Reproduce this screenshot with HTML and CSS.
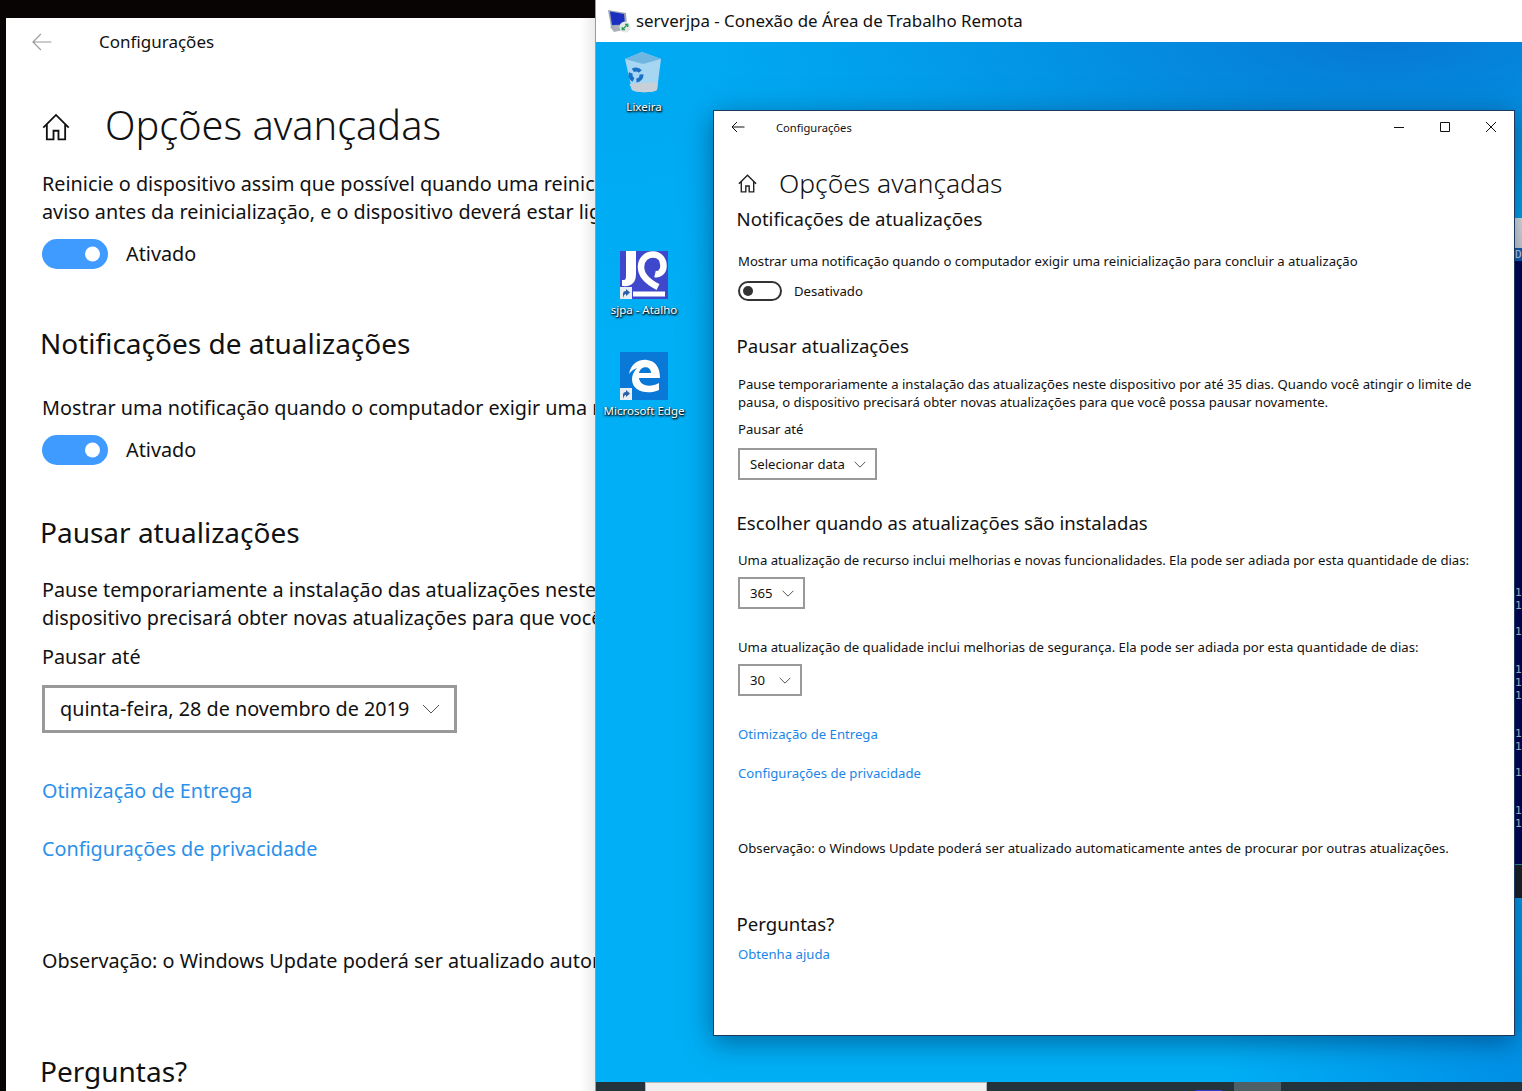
FILE: index.html
```html
<!DOCTYPE html>
<html lang="pt-BR">
<head>
    <meta charset="UTF-8">
    <title>Opções avançadas</title>
    <link rel="stylesheet" href="styles.css">
</head>
<body>
    <!-- janela local, cortada pela conexão remota -->
    <div class="local-side">
        <div class="settings settings-big">
            <div class="titlebar">
                <svg class="back-icon" viewBox="0 0 18 16"><path d="M17.5 8H1M8 .8 .8 8 8 15.2"/></svg>
                <span class="app-name">Configurações</span>
            </div>
            <div class="page-head">
                <svg class="home-icon" viewBox="0 0 26 26"><path d="M1.2 13.5 13 1.8l11.8 11.7M4.5 10.5V24.5h6.2v-8h4.6v8h6.2V10.5"/></svg>
                <h1>Opções avançadas</h1>
            </div>
            <p class="restart-text">Reinicie o dispositivo assim que possível quando uma reinicialização<br>aviso antes da reinicialização, e o dispositivo deverá estar ligado</p>
            <div class="toggle-row">
                <span class="toggle toggle-on"></span>
                <span>Ativado</span>
            </div>
            <h2 class="notify-title">Notificações de atualizações</h2>
            <p class="notify-text">Mostrar uma notificação quando o computador exigir uma reinicialização</p>
            <div class="toggle-row">
                <span class="toggle toggle-on"></span>
                <span>Ativado</span>
            </div>
            <h2 class="pause-title">Pausar atualizações</h2>
            <p class="pause-text">Pause temporariamente a instalação das atualizações neste dispositivo<br>dispositivo precisará obter novas atualizações para que você possa</p>
            <p class="pause-label">Pausar até</p>
            <div class="select date-select">
                <span>quinta-feira, 28 de novembro de 2019</span>
                <svg class="chevron" viewBox="0 0 18 10"><path d="M1 1l8 8 8-8"/></svg>
            </div>
            <a class="link link-first">Otimização de Entrega</a>
            <a class="link link-second">Configurações de privacidade</a>
            <p class="note-text">Observação: o Windows Update poderá ser atualizado automaticamente</p>
            <h2 class="help-title">Perguntas?</h2>
        </div>
    </div>

    <div class="remote-side">
        <div class="rdp-bar">
            <svg class="rdp-icon" viewBox="0 0 24 24">
                <path d="M0 1l18 3 1 13-16 1z" fill="#9aa3b5"/>
                <path d="M2 2.5l14 2.5 1 10.5-13 .5z" fill="#1a2fc0"/>
                <path d="M2 18l15-1 3 3-14 3z" fill="#a9aeb8"/>
                <circle cx="17" cy="18" r="5.5" fill="#e4e8e6"/>
                <path d="M14.3 20.7l5.4-5.4M14.3 18v2.7H17M19.7 18v-2.7H17" stroke="#2c9a58" stroke-width="1.3" fill="none"/>
            </svg>
            <span class="rdp-title">serverjpa - Conexão de Área de Trabalho Remota</span>
        </div>
        <div class="desktop">
            <div class="desk-icon bin-icon">
                <svg viewBox="0 0 48 48" width="48" height="48">
                    <path d="M5 8 22 1l19 7-4 31c-5 3-20 3-25 0z" fill="#a6d6f1"/>
                    <path d="M5 8l17-7 19 7-18 5z" fill="#6fb6e2"/>
                    <path d="M9.5 33 38 31l-1 8c-5 3-20 3-25 0z" fill="#c6d0d6"/>
                    <circle cx="16" cy="24" r="5.5" fill="none" stroke="#1c6fc4" stroke-width="4" stroke-dasharray="8 3"/>
                </svg>
                <span class="desk-label">Lixeira</span>
            </div>
            <div class="desk-icon sjpa-icon">
                <div class="tile tile-jq">
                    <svg viewBox="0 0 48 48" width="48" height="48">
                        <path d="M6 0h10v23c0 9-5 13-14 12v-6c4 .5 4-1 4-6z" fill="#fff"/>
                        <path d="M38 36C28 31 21 25 21 16 21 8 27 3.500 33 3.500 40 3.500 43.500 9 43.500 15 43.500 21 39 24 35 23" fill="none" stroke="#fff" stroke-width="6.500"/>
                        <rect x="13" y="40.500" width="32" height="5" fill="#fff"/>
                    </svg>
                    <svg class="shortcut" viewBox="0 0 12 12"><rect width="12" height="12" fill="#e8eef2"/><path d="M3 11V7c0-2 1-3 3-3V2l4 3.500L6 9V7C4.500 7 4 8 3 11z" fill="#2b5fa8"/></svg>
                </div>
                <span class="desk-label">sjpa - Atalho</span>
            </div>
            <div class="desk-icon edge-icon">
                <div class="tile tile-edge">
                    <svg viewBox="0 0 48 48" width="48" height="48">
                        <path d="M9 22C11 11 20 7 27 8c9 1 13 8 13 18H19c1 8 11 10 20 5v7c-11 5-27 2-27-11 0-4 2-8 5-11-3 1-6 3-8 6zM19 21h12c0-7-10-8-12 0z" fill="#fff"/>
                    </svg>
                    <svg class="shortcut" viewBox="0 0 12 12"><rect width="12" height="12" fill="#e8eef2"/><path d="M3 11V7c0-2 1-3 3-3V2l4 3.500L6 9V7C4.500 7 4 8 3 11z" fill="#2b5fa8"/></svg>
                </div>
                <span class="desk-label">Microsoft Edge</span>
            </div>

            <div class="console-strip">
                <span class="strip-gray"></span>
                <span class="strip-title">D</span>
                <span class="strip-body">
                    <span>1</span><span>1</span><span class="gap-a">1</span>
                    <span class="gap-b">1</span><span>1</span><span>1</span>
                    <span class="gap-b">1</span><span>1</span><span class="gap-a">1</span>
                    <span class="gap-b">1</span><span>1</span>
                </span>
                <span class="strip-dark"></span>
            </div>

            <div class="settings settings-small remote-window">
                <div class="titlebar">
                    <svg class="back-icon" viewBox="0 0 14 12"><path d="M13.5 6H1M6 1 1 6l5 5"/></svg>
                    <span class="app-name">Configurações</span>
                    <div class="window-buttons">
                        <svg viewBox="0 0 12 12"><path d="M1 6.500h10"/></svg>
                        <svg viewBox="0 0 12 12"><path d="M1.500 1.500h9v9h-9z"/></svg>
                        <svg viewBox="0 0 12 12"><path d="M1 1l10 10M11 1 1 11"/></svg>
                    </div>
                </div>
                <div class="page-head">
                    <svg class="home-icon" viewBox="0 0 26 26"><path d="M1.2 13.5 13 1.8l11.8 11.7M4.5 10.5V24.5h6.2v-8h4.6v8h6.2V10.5"/></svg>
                    <h1>Opções avançadas</h1>
                </div>
                <h2 class="notify-title">Notificações de atualizações</h2>
                <p class="notify-text">Mostrar uma notificação quando o computador exigir uma reinicialização para concluir a atualização</p>
                <div class="toggle-row">
                    <span class="toggle toggle-off"></span>
                    <span>Desativado</span>
                </div>
                <h2 class="pause-title">Pausar atualizações</h2>
                <p class="pause-text">Pause temporariamente a instalação das atualizações neste dispositivo por até 35 dias. Quando você atingir o limite de<br>pausa, o dispositivo precisará obter novas atualizações para que você possa pausar novamente.</p>
                <p class="pause-label">Pausar até</p>
                <div class="select date-select">
                    <span>Selecionar data</span>
                    <svg class="chevron" viewBox="0 0 18 10"><path d="M1 1l8 8 8-8"/></svg>
                </div>
                <h2 class="when-title">Escolher quando as atualizações são instaladas</h2>
                <p class="feature-text">Uma atualização de recurso inclui melhorias e novas funcionalidades. Ela pode ser adiada por esta quantidade de dias:</p>
                <div class="select days-select">
                    <span>365</span>
                    <svg class="chevron" viewBox="0 0 18 10"><path d="M1 1l8 8 8-8"/></svg>
                </div>
                <p class="quality-text">Uma atualização de qualidade inclui melhorias de segurança. Ela pode ser adiada por esta quantidade de dias:</p>
                <div class="select days-select days-short">
                    <span>30</span>
                    <svg class="chevron" viewBox="0 0 18 10"><path d="M1 1l8 8 8-8"/></svg>
                </div>
                <a class="link link-first">Otimização de Entrega</a>
                <a class="link link-second">Configurações de privacidade</a>
                <p class="note-text">Observação: o Windows Update poderá ser atualizado automaticamente antes de procurar por outras atualizações.</p>
                <h2 class="help-title">Perguntas?</h2>
                <a class="link help-link">Obtenha ajuda</a>
            </div>
        </div>
        <div class="taskbar">
            <span class="task-search"></span>
            <span class="task-app"><span class="task-app-icon"></span></span>
            <span class="task-active"></span>
        </div>
    </div>
</body>
</html>
```
FILE: styles.css
```css
* {
    margin: 0;
    padding: 0;
    box-sizing: border-box;
}

html, body {
    height: 100%;
    overflow: hidden;
}

body {
    display: flex;
    background-color: #070403;
    font-family: "Noto Sans", "Open Sans", Arial, sans-serif;
    color: #111;
}

/* lado esquerdo */
.local-side {
    width: 595px;
    flex-shrink: 0;
    padding: 18px 0 0 6px;
    height: 100%;
}

.local-side .settings {
    height: 100%;
    overflow: hidden;
    background: linear-gradient(to right, #fff 97.5%, #ececec);
}

.settings {
    background-color: #fff;
    white-space: nowrap;
}

.settings h1, .settings h2, .settings p {
    font-weight: 400;
}

.titlebar {
    display: flex;
    align-items: center;
}

.page-head {
    display: flex;
    align-items: center;
}

.back-icon, .home-icon, .chevron, .window-buttons svg {
    fill: none;
    stroke-width: 1;
    flex-shrink: 0;
}

.toggle-row {
    display: flex;
    align-items: center;
}

.toggle {
    display: block;
    position: relative;
    border-radius: 100px;
}

.toggle::after {
    content: "";
    position: absolute;
    border-radius: 50%;
    top: 50%;
    transform: translateY(-50%);
}

.select {
    display: flex;
    align-items: center;
    justify-content: space-between;
    border-style: solid;
    border-color: #999;
}

.chevron {
    stroke: #555;
}

.link {
    display: block;
    color: #1a86e8;
}

/* janela grande (1,5x) */
.settings-big {
    font-size: 19.8px;
    line-height: 28px;
    padding-left: 36px;
}

.settings-big .link {
    color: #2b90ea;
}

.settings-big .titlebar {
    height: 48px;
    margin-left: -10px;
}

.settings-big .back-icon {
    width: 20px;
    height: 18px;
    stroke: #999;
}

.settings-big .app-name {
    font-size: 17px;
    margin-left: 47px;
}

.settings-big .page-head {
    margin-top: 29px;
    height: 60px;
}

.settings-big .home-icon {
    width: 28px;
    height: 28px;
    stroke: #111;
    stroke-width: 1.7;
    margin-top: 3px;
}

.settings-big h1 {
    font-size: 39.7px;
    line-height: 60px;
    margin-left: 35px;
    font-weight: 300;
}

.settings-big h2 {
    font-size: 28px;
    line-height: 40px;
    margin-left: -2px;
}

.settings-big .restart-text {
    margin-top: 15px;
}

.settings-big .toggle-row {
    margin-top: 13px;
    height: 30px;
    gap: 18px;
}

.settings-big .toggle {
    width: 66px;
    height: 30px;
    background-color: #3f9bff;
}

.settings-big .toggle::after {
    right: 8px;
    width: 15px;
    height: 15px;
    background-color: #fff;
}

.settings-big .notify-title {
    margin-top: 54px;
}

.settings-big .notify-text {
    margin-top: 31px;
}

.settings-big .pause-title {
    margin-top: 47px;
}

.settings-big .pause-text {
    margin-top: 24px;
}

.settings-big .pause-label {
    margin-top: 11px;
}

.settings-big .date-select {
    width: 415px;
    height: 48px;
    margin-top: 14px;
    border-width: 3px;
    padding: 0 14px 0 15px;
}

.settings-big .chevron {
    width: 18px;
    height: 10px;
}

.settings-big .link-first {
    margin-top: 44px;
}

.settings-big .link-second {
    margin-top: 30px;
}

.settings-big .note-text {
    margin-top: 84px;
}

.settings-big .help-title {
    margin-top: 76px;
}

/* conexão remota */
.remote-side {
    flex: 1;
    display: flex;
    flex-direction: column;
    height: 100%;
    border-left: 1px solid #9a9a9a;
    min-width: 0;
}

.rdp-bar {
    height: 42px;
    flex-shrink: 0;
    background-color: #fff;
    display: flex;
    align-items: center;
    gap: 4px;
    padding-left: 12px;
    font-size: 16.9px;
    color: #111;
}

.rdp-title {
    margin-top: -2px;
}

.rdp-icon {
    width: 24px;
    height: 24px;
}

.desktop {
    flex: 1;
    position: relative;
    overflow: hidden;
    background-color: #00aff5;
    background-image:
        radial-gradient(ellipse 700px 220px at 85% 0%, #0679d4 0%, rgba(6, 121, 212, 0) 100%),
        radial-gradient(ellipse 300px 500px at 100% 100%, #0090e6 0%, rgba(0, 144, 230, 0) 100%),
        radial-gradient(ellipse 400px 300px at 0% 0%, #00a8f2 0%, rgba(0, 168, 242, 0) 100%);
}

.desk-icon {
    position: absolute;
    width: 90px;
    display: flex;
    flex-direction: column;
    align-items: center;
    color: #fff;
    font-size: 11.5px;
    line-height: 16px;
}

.desk-label {
    text-shadow: 0 1px 2px #000, 1px 1px 2px #000;
    white-space: nowrap;
}

.bin-icon {
    left: 3px;
    top: 9px;
}

.sjpa-icon {
    left: 3px;
    top: 209px;
}

.edge-icon {
    left: 3px;
    top: 310px;
}

.tile {
    position: relative;
    width: 48px;
    height: 48px;
    margin-bottom: 3px;
}

.tile-jq {
    background-color: #3f48cc;
}

.tile-edge {
    background-color: #0a78d7;
}

.shortcut {
    position: absolute;
    left: 0;
    bottom: 0;
    width: 12px;
    height: 12px;
}

.console-strip {
    position: absolute;
    right: 0;
    top: 176px;
    width: 7px;
    display: flex;
    flex-direction: column;
    font-family: "DejaVu Sans Mono", monospace;
    font-size: 11px;
    line-height: 13px;
    color: #c8c8d8;
}

.strip-gray {
    height: 30px;
    background: linear-gradient(#e8e8e8, #d8d8d8);
}

.strip-title {
    height: 13px;
    background-color: #0a5fb4;
    color: #dde;
}

.strip-body {
    height: 604px;
    background-color: #02014f;
    border-bottom: 1px solid #2a8f98;
    display: flex;
    flex-direction: column;
    padding-top: 325px;
}

.gap-a {
    margin-top: 13px;
}

.gap-b {
    margin-top: 25px;
}

.strip-dark {
    height: 33px;
    background-color: #1d1d1d;
}

.taskbar {
    height: 9px;
    flex-shrink: 0;
    background-color: #22333c;
    display: flex;
    overflow: hidden;
    padding-left: 49px;
}

.task-search {
    width: 342px;
    background-color: #f0f0f0;
    border: 1px solid #b5b5b5;
    border-bottom: none;
}

.task-app {
    width: 235px;
    display: flex;
    justify-content: flex-end;
}

.task-app-icon {
    width: 26px;
    background-color: #3b36d0;
    margin-top: 8px;
}

.task-active {
    width: 47px;
    margin-left: 12px;
    background-color: #4e5f66;
}

/* janela remota */
.remote-window {
    position: absolute;
    left: 117px;
    top: 68px;
    width: 802px;
    height: 926px;
    border: 1px solid #1c3a5a;
    box-shadow: 0 6px 26px rgba(0, 30, 70, 0.5);
    font-size: 13.15px;
    line-height: 19px;
    padding-left: 24px;
}

.settings-small .titlebar {
    height: 32px;
    margin-left: -7px;
}

.settings-small .back-icon {
    width: 14px;
    height: 12px;
    stroke: #111;
}

.settings-small .app-name {
    font-size: 11.2px;
    margin-left: 31px;
}

.window-buttons {
    margin-left: auto;
    display: flex;
    gap: 34px;
    padding-right: 17px;
}

.window-buttons svg {
    width: 12px;
    height: 12px;
    stroke: #111;
}

.settings-small .page-head {
    margin-top: 20px;
    height: 40px;
}

.settings-small .home-icon {
    width: 19px;
    height: 19px;
    stroke: #222;
    stroke-width: 1.9;
}

.settings-small h1 {
    font-size: 26.4px;
    line-height: 40px;
    margin-left: 22px;
    font-weight: 300;
}

.settings-small h2 {
    font-size: 18.6px;
    line-height: 26px;
    margin-left: -1.5px;
}

.settings-small .notify-title {
    margin-top: 3px;
}

.settings-small .notify-text {
    margin-top: 20px;
}

.settings-small .toggle-row {
    margin-top: 10px;
    height: 20px;
    gap: 12px;
}

.settings-small .toggle {
    width: 44px;
    height: 20px;
    border: 2px solid #333;
}

.settings-small .toggle::after {
    left: 3px;
    width: 10px;
    height: 10px;
    background-color: #333;
}

.settings-small .pause-title {
    margin-top: 32px;
}

.settings-small .pause-text {
    margin-top: 16px;
    line-height: 18px;
}

.settings-small .pause-label {
    margin-top: 9px;
}

.settings-small .select {
    height: 32px;
    margin-top: 7px;
    border-width: 2px;
    padding: 0 9px 0 10px;
}

.settings-small .date-select {
    width: 139px;
    margin-top: 9px;
}

.settings-small .days-select {
    width: 67px;
}

.settings-small .days-short {
    width: 64px;
}

.settings-small .chevron {
    width: 12px;
    height: 7px;
    stroke-width: 1.5;
}

.settings-small .when-title {
    margin-top: 30px;
}

.settings-small .feature-text {
    margin-top: 15px;
}

.settings-small .quality-text {
    margin-top: 29px;
}

.settings-small .link-first {
    margin-top: 29px;
}

.settings-small .link-second {
    margin-top: 20px;
}

.settings-small .note-text {
    margin-top: 56px;
}

.settings-small .help-title {
    margin-top: 53px;
}

.settings-small .help-link {
    margin-top: 8px;
}
```
